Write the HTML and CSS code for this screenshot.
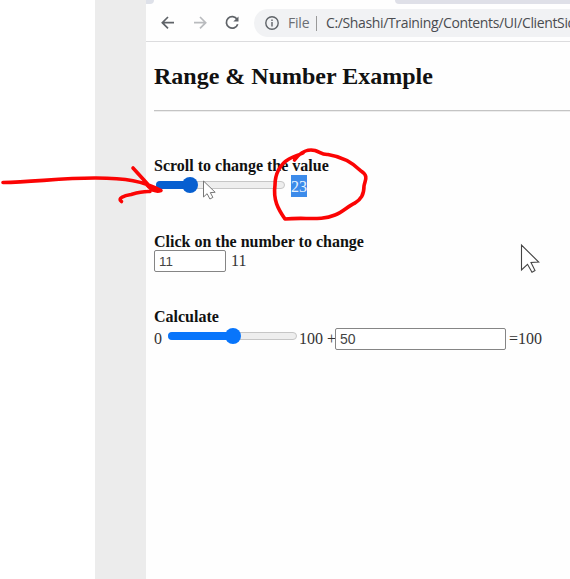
FILE: index.html
```html
<!DOCTYPE html>
<html lang="en">
<head>
<meta charset="utf-8">
<title>Range &amp; Number Example</title>
<link rel="stylesheet" href="styles.css">
</head>
<body>
<div class="screen">
  <aside class="gutter"></aside>
  <div class="browser">
    <header class="toolbar">
      <div class="tabstrip"><span class="tab-left"></span><span class="tab-right"></span></div>
      <nav class="navbar">
        <svg class="nav-icons" width="108" height="36" viewBox="0 0 108 36" fill="none" stroke-width="1.7">
          <path d="M28 17.7H16.5M22 12l-5.7 5.7 5.7 5.7" stroke="#5f6368"/>
          <path d="M48 17.7h11.5M54 12l5.7 5.7-5.7 5.7" stroke="#b9bbbe"/>
          <path d="M91.1 14.3a5.8 5.8 0 1 0 .6 4.9" stroke="#5f6368"/>
          <path d="M92.5 11.4v5.2h-5.2z" fill="#5f6368"/>
        </svg>
        <div class="address">
          <svg width="16" height="16" viewBox="0 0 16 16" fill="none" stroke="#5f6368" stroke-width="1.4"><circle cx="8" cy="8" r="6.2"/><path d="M8 7v4.5M8 4.4v1.5"/></svg>
          <span class="scheme">File</span><span class="divider"></span><span class="url">C:/Shashi/Training/Contents/UI/ClientSide</span>
        </div>
      </nav>
    </header>
    <main class="page">
      <h1>Range &amp; Number Example</h1>
      <hr>
      <section class="group">
        <h2>Scroll to change the value</h2>
        <div class="row scroll-row"><span class="range active"><span class="fill"></span><span class="thumb"></span></span><span class="selected">23</span></div>
      </section>
      <section class="group">
        <h2>Click on the number to change</h2>
        <div class="row number-row"><input class="small" value="11" aria-label="Number"><span class="out">11</span></div>
      </section>
      <section class="group">
        <h2>Calculate</h2>
        <div class="row calc-row"><span class="zero">0</span><span class="range half"><span class="fill"></span><span class="thumb"></span></span><span class="hundred">100 +</span><input class="wide" value="50" aria-label="Addend"><span class="result">=100</span></div>
      </section>
    </main>
  </div>
  <svg class="overlay" width="570" height="579" viewBox="0 0 570 579" fill="none">
    <path d="M203.5 181v16l3.6-3.3 2.8 5.3 3-1.6-2.6-4.8 4.9-.3z" fill="#fff" stroke="#777" stroke-width="1"/>
    <path d="M521.5 245v25l6-5.7 4.5 8 3-1.8-4-8 7.7-.4z" fill="#fff" stroke="#444" stroke-width="1.1"/>
    <g stroke="#fb0404" stroke-width="3.6" stroke-linecap="round" stroke-linejoin="round">
      <path d="M3 182.5C34 182 62 177.8 96 178C126 178 143 181 161 190.5C155 192.5 150 189 146 184M133 168L153 190M150 191.5C142 191 136 193 131 194.5C124 195.500 117 198.500 121.500 201.500"/>
      <path d="M294.500 160C301 151 309 149 315 150.500C320 152 322 155 328 154.500C344 157 354 164 361 171C369 176 365 180 364 186C364 195 361 199 355 203C348 206 343 212 335 215C321 221 305 217 285 219C278 209 273 200 275 185C275 174 280 164 289 159C296 155 297 156 303 153"/>
    </g>
  </svg>
</div>
</body>
</html>
```
FILE: styles.css
```css
* { box-sizing: border-box; }
body { margin: 0; background: #fff; overflow: hidden; }
.screen { position: relative; display: flex; width: 570px; height: 579px; overflow: hidden; }
.gutter { flex: none; width: 51px; margin-left: 95px; background: #ececec; }
.browser { flex: none; width: 424px; background: #fefefe; overflow: hidden; }
.toolbar { height: 42px; border-bottom: 1px solid #dcdcde; }
.tabstrip { display: flex; justify-content: space-between; height: 4px; }
.tab-left { width: 8px; background: #dee1e9; border-bottom-right-radius: 8px; }
.tab-right { width: 175px; background: #dfe0e8; border-bottom-left-radius: 6px; }
.navbar { display: flex; align-items: flex-start; height: 37px; padding-top: 1px; }
.nav-icons { flex: none; }
.address { flex: none; display: flex; align-items: center; width: 340px; height: 28px; margin-top: 4px; padding-left: 10px; border-radius: 14px; background: #f1f2f4; font: 14px/28px "Open Sans", "Noto Sans", sans-serif; white-space: nowrap; }
.address svg { flex: none; }
.scheme { width: 22px; margin-left: 8px; color: #6b6e73; letter-spacing: -.2px; }
.divider { width: 1px; height: 15px; margin: 0 9px 0 6px; background: #999; }
.url { color: #4a4c50; letter-spacing: -.36px; }
.page { padding-left: 8px; font: 16px/20px "Liberation Serif", serif; color: #333; }
h1 { margin: 19px 0 0; font-size: 24px; line-height: 30px; color: #111; white-space: nowrap; }
hr { height: 2px; margin: 19px 0 44px; border: 0; border-top: 1px solid #c4c4c4; border-bottom: 1px solid #ededed; }
.group { height: 76px; }
.group:last-child { margin-top: -1px; }
h2 { margin: 0; font-size: 16px; line-height: 19px; color: #111; white-space: nowrap; }
.row { display: flex; align-items: center; height: 22px; white-space: nowrap; }
.scroll-row { height: 20px; }
.number-row { margin-top: -1px; }
.range { position: relative; flex: none; width: 129px; height: 8px; border: 1px solid #c6c6c6; border-radius: 4px; background: #eee; }
.fill { position: absolute; top: -1px; left: -1px; height: 8px; border-radius: 4px; background: var(--accent); }
.thumb { position: absolute; top: -5px; width: 16px; height: 16px; border-radius: 50%; background: var(--accent); }
.active { --accent: #075fd0; margin-left: 2px; }
.active .fill { width: 34px; }
.active .thumb { left: 25px; }
.half { --accent: #0875fb; margin: -6px 0 0 6px; }
.half .fill { width: 65px; }
.half .thumb { left: 56px; }
.selected { height: 22px; margin: 2px 0 0 6px; line-height: 23px; background: #3c8bea; color: #e5f2ff; }
input { flex: none; height: 22px; padding: 0 3px; border: 1px solid #858585; border-radius: 2px; background: #fff; color: #444; font: 13.33px "Liberation Sans", sans-serif; }
.small { width: 72px; padding-left: 4px; }
.wide { width: 171px; font-size: 14px; padding-left: 4px; }
.out { margin-left: 5px; }
.calc-row { margin-top: 2px; }
.zero { width: 8px; }
.hundred { width: 36px; margin-left: 2px; }
.result { margin-left: 3px; }
.overlay { position: absolute; inset: 0; pointer-events: none; }
```
